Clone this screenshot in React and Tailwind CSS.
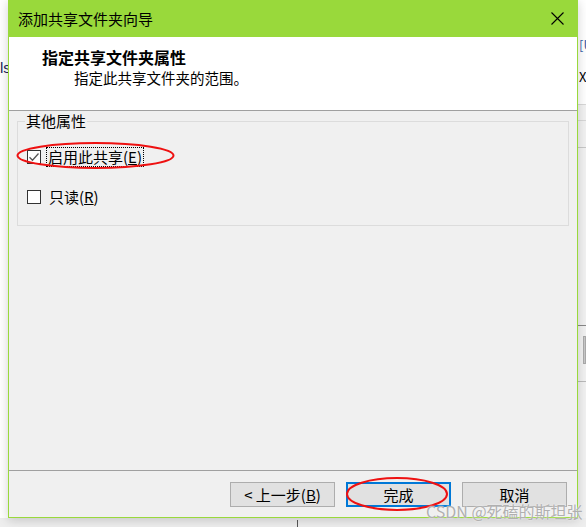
import React from "react";

const FONT = { fontFamily: '"Noto Sans CJK SC", "Noto Sans", sans-serif' };

function Checkbox({ checked }) {
  return (
    <div className="w-[14px] h-[14px] border border-[#333333] bg-white flex items-center justify-center shrink-0">
      {checked && (
        <svg width="12" height="12" viewBox="0 0 12 12">
          <path d="M1.5 6.2 L4.5 9.2 L10.5 2.5" fill="none" stroke="#555" strokeWidth="1.3" />
        </svg>
      )}
    </div>
  );
}

function Btn({ children, focused }) {
  return (
    <div
      className={
        "w-[105px] h-[25px] flex items-center justify-center bg-[#e1e1e1] text-[15px] leading-none text-black " +
        (focused ? "border-2 border-[#0078d7]" : "border border-[#adadad]")
      }
    >
      {children}
    </div>
  );
}

export default function App() {
  return (
    <div className="relative w-[586px] h-[527px] bg-white overflow-hidden" style={FONT}>
      {/* desktop background bits */}
      <div className="absolute left-[578px] top-0 w-[8px] h-full bg-[#f2f2f2] flex flex-col">
        <div className="h-[104px] bg-white relative">
          <span className="absolute left-[1px] top-[38px] text-[13px] text-[#3a5fa8] leading-none">[U</span>
          <span className="absolute left-[1px] top-[70px] text-[13px] text-black leading-none">X:</span>
        </div>
        <div className="h-px bg-[#d8d8d8]" />
        <div className="h-[15px]" />
        <div className="h-px bg-[#d8d8d8]" />
        <div className="h-[26px]" />
        <div className="h-px bg-[#c8c8c8]" />
        <div className="h-[177px]" />
        <div className="h-px bg-[#888]" />
        <div className="h-[10px]" />
        <div className="h-[28px] ml-[5px] bg-[#c9c9c9] border border-[#aaa]" />
        <div className="h-[17px]" />
        <div className="h-px bg-[#bbb]" />
      </div>
      <span className="absolute left-0 top-[60px] text-[15px] text-[#1c1c5a] leading-none" style={{ fontFamily: '"Liberation Sans", sans-serif' }}>ls</span>
      <div className="absolute left-0 top-[518px] w-full h-[9px] bg-[#eeeeee]" />
      <div className="absolute left-[297px] top-[520px] w-px h-[7px] bg-[#555]" />

      {/* dialog window */}
      <div className="absolute left-[8px] top-0 w-[570px] h-[518px] border-x border-b border-[#99d93b] bg-[#f0f0f0] flex flex-col shadow-[0_2px_10px_rgba(0,0,0,0.18)]">
        {/* title bar */}
        <div className="h-[37px] bg-[#99d93b] flex items-center justify-between pl-[9px] pr-[13px] shrink-0">
          <span className="text-[15px] leading-none text-black">添加共享文件夹向导</span>
          <svg width="13" height="13" viewBox="0 0 13 13">
            <path d="M0.5 0.5 L12.5 12.5 M12.5 0.5 L0.5 12.5" stroke="#000" strokeWidth="1.1" />
          </svg>
        </div>
        {/* header */}
        <div className="h-[73px] bg-white flex flex-col pl-[33px] pt-[10px] shrink-0">
          <span className="text-[16px] leading-[20px] font-bold text-black">指定共享文件夹属性</span>
          <span className="text-[14.5px] leading-[20px] mt-[1px] ml-[32px] text-black">指定此共享文件夹的范围。</span>
        </div>
        <div className="h-px bg-[#a0a0a0] shrink-0" />
        {/* body */}
        <div className="flex-1 flex flex-col px-[8px]">
          <fieldset className="border border-[#dcdcdc] pl-[9px] pr-[9px] pt-[16px] pb-[18px] flex flex-col gap-[20px]">
            <legend className="text-[15px] leading-[20px] text-black px-[1px] -ml-[2px]">其他属性</legend>
            <div className="flex items-center h-[20px] gap-[5px]">
              <Checkbox checked />
              <span className="border border-dotted border-black px-[1px] text-[15px] leading-[18px] text-black">
                启用此共享(<span className="underline">E</span>)
              </span>
            </div>
            <div className="flex items-center h-[20px] gap-[5px]">
              <Checkbox />
              <span className="border border-transparent px-[2px] text-[15px] leading-[18px] text-black">
                只读(<span className="underline">R</span>)
              </span>
            </div>
          </fieldset>
        </div>
        <div className="h-px bg-[#a0a0a0] shrink-0" />
        {/* footer */}
        <div className="h-[46px] flex justify-end items-start gap-[11px] pr-[10px] pt-[11px] shrink-0">
          <Btn>
            &lt; 上一步(<span className="underline">B</span>)
          </Btn>
          <Btn focused>完成</Btn>
          <Btn>取消</Btn>
        </div>
      </div>

      {/* red annotations */}
      <svg className="absolute left-0 top-0 pointer-events-none" width="586" height="527">
        <ellipse cx="95.5" cy="155.5" rx="78" ry="12.5" fill="none" stroke="#ee1111" strokeWidth="2" />
        <ellipse cx="397" cy="494" rx="50" ry="16" fill="none" stroke="#ee1111" strokeWidth="2" />
      </svg>

      {/* watermark */}
      <span
        className="absolute left-[426px] top-[501px] text-[16px] leading-[20px] text-[#b0b0b0] whitespace-nowrap"
        style={{ textShadow: "0 0 2px rgba(255,255,255,0.9)" }}
      >
        CSDN @死磕的斯坦张
      </span>
    </div>
  );
}
